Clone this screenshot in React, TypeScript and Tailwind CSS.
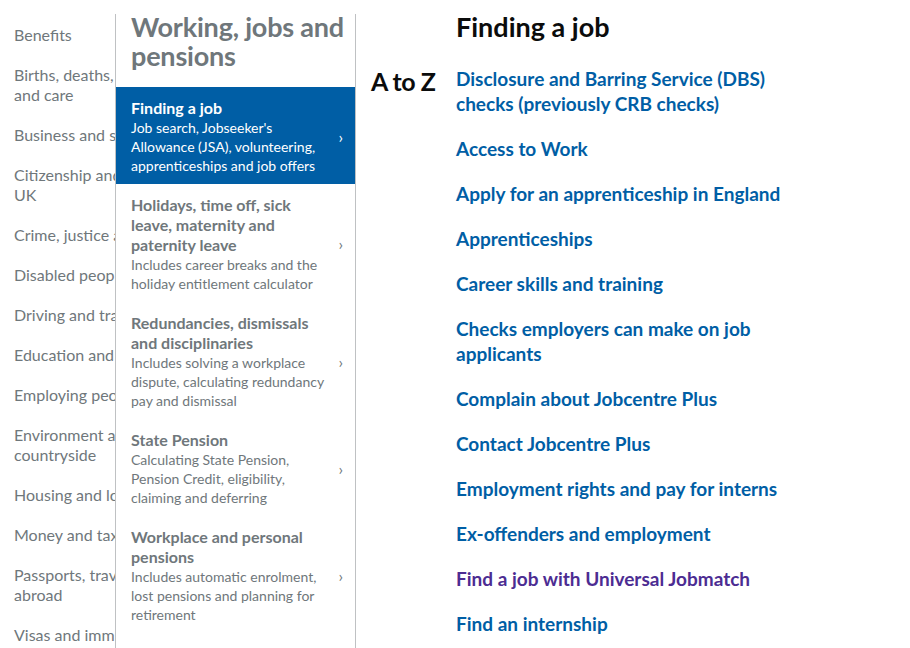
import React from "react";

const leftItems: string[][] = [
  ["Benefits"],
  ["Births, deaths, marriages", "and care"],
  ["Business and self-employed"],
  ["Citizenship and living in the", "UK"],
  ["Crime, justice and the law"],
  ["Disabled people"],
  ["Driving and transport"],
  ["Education and learning"],
  ["Employing people"],
  ["Environment and", "countryside"],
  ["Housing and local services"],
  ["Money and tax"],
  ["Passports, travel and living", "abroad"],
  ["Visas and immigration"],
];

type Mid = { title: string[]; desc: string[]; active?: boolean };

const midItems: Mid[] = [
  {
    title: ["Finding a job"],
    desc: ["Job search, Jobseeker's", "Allowance (JSA), volunteering,", "apprenticeships and job offers"],
    active: true,
  },
  {
    title: ["Holidays, time off, sick", "leave, maternity and", "paternity leave"],
    desc: ["Includes career breaks and the", "holiday entitlement calculator"],
  },
  {
    title: ["Redundancies, dismissals", "and disciplinaries"],
    desc: ["Includes solving a workplace", "dispute, calculating redundancy", "pay and dismissal"],
  },
  {
    title: ["State Pension"],
    desc: ["Calculating State Pension,", "Pension Credit, eligibility,", "claiming and deferring"],
  },
  {
    title: ["Workplace and personal", "pensions"],
    desc: ["Includes automatic enrolment,", "lost pensions and planning for", "retirement"],
  },
  {
    title: ["Working, jobs and pensions"],
    desc: ["Includes tax, rights and", "self-employment"],
  },
];

const links: { t: string[]; visited?: boolean }[] = [
  { t: ["Disclosure and Barring Service (DBS)", "checks (previously CRB checks)"] },
  { t: ["Access to Work"] },
  { t: ["Apply for an apprenticeship in England"] },
  { t: ["Apprenticeships"] },
  { t: ["Career skills and training"] },
  { t: ["Checks employers can make on job", "applicants"] },
  { t: ["Complain about Jobcentre Plus"] },
  { t: ["Contact Jobcentre Plus"] },
  { t: ["Employment rights and pay for interns"] },
  { t: ["Ex-offenders and employment"] },
  { t: ["Find a job with Universal Jobmatch"], visited: true },
  { t: ["Find an internship"] },
  { t: ["Find work"] },
];

function Lines({ lines }: { lines: string[] }) {
  return (
    <>
      {lines.map((l, i) => (
        <span key={i} className="block whitespace-nowrap">
          {l}
        </span>
      ))}
    </>
  );
}

export default function App() {
  return (
    <div
      className="w-[910px] h-[648px] overflow-hidden bg-white flex"
      style={{ fontFamily: "Lato, 'Noto Sans', sans-serif" }}
    >
      {/* Left column (clipped) */}
      <div className="w-[115px] shrink-0 overflow-hidden pl-[14px] pt-[25px]">
        <ul className="flex flex-col gap-[20px]">
          {leftItems.map((l, i) => (
            <li key={i} className="text-[16px] leading-[20px] text-[#6f777b]">
              <Lines lines={l} />
            </li>
          ))}
        </ul>
      </div>

      {/* Middle column */}
      <div className="w-[241px] shrink-0 mt-[14px] border-l border-r border-[#bfc1c3] flex flex-col">
        <h2 className="px-[15px] -mt-[2px] text-[27px] leading-[29px] font-bold text-[#6f777b] tracking-[-0.2px]">
          <Lines lines={["Working, jobs and", "pensions"]} />
        </h2>
        <ul className="mt-[17px] flex flex-col">
          {midItems.map((m, i) => (
            <li
              key={i}
              className={
                m.active
                  ? "bg-[#005ea5] text-white flex items-center pl-[15px] pr-[12px] pt-[11px] pb-[9px]"
                  : "text-[#6f777b] flex items-center pl-[15px] pr-[12px] pt-[11px] pb-[9px]"
              }
            >
              <div>
                <div className="text-[16px] leading-[20px] font-bold">
                  <Lines lines={m.title} />
                </div>
                <div className="text-[14px] leading-[19px]">
                  <Lines lines={m.desc} />
                </div>
              </div>
              <span className="ml-auto text-[16px] leading-none">›</span>
            </li>
          ))}
        </ul>
      </div>

      {/* Right section */}
      <div className="flex-1 pl-[15px] pt-[11px]">
        <div className="grid grid-cols-[85px_1fr]">
          <div />
          <h1 className="text-[27px] leading-[32px] font-bold text-[#0b0c0c]">Finding a job</h1>
          <div className="pt-[23px] text-[25px] leading-[30px] font-bold text-[#0b0c0c] tracking-[-0.5px]">
            A to Z
          </div>
          <ul className="mt-[23px] flex flex-col gap-[20px]">
            {links.map((l, i) => (
              <li
                key={i}
                className={
                  l.visited
                    ? "text-[19px] leading-[25px] font-bold text-[#4c2c92]"
                    : "text-[19px] leading-[25px] font-bold text-[#005ea5]"
                }
              >
                <Lines lines={l.t} />
              </li>
            ))}
          </ul>
        </div>
      </div>
    </div>
  );
}
